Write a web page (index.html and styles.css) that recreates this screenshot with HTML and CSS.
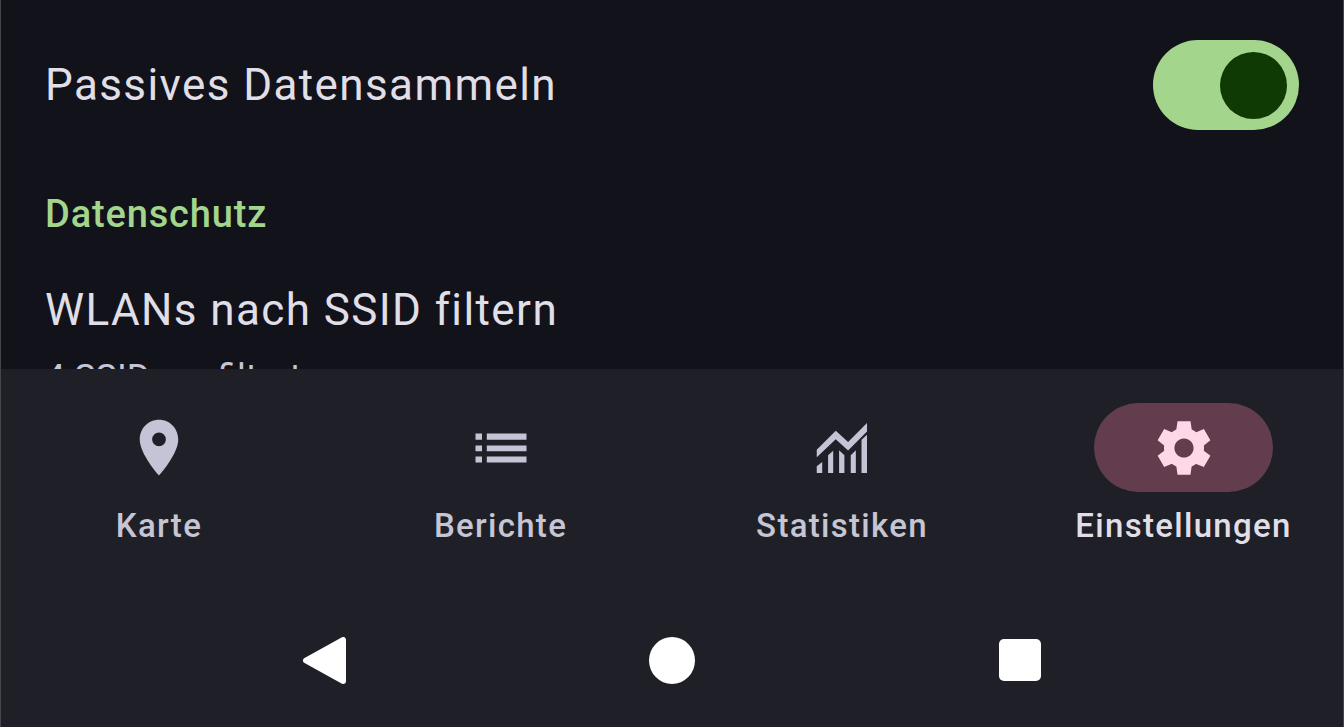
FILE: index.html
```html
<!DOCTYPE html>
<html lang="de">
<head>
<meta charset="utf-8">
<title>Einstellungen</title>
<link rel="stylesheet" href="styles.css">
</head>
<body>
<div class="screen">
  <main class="settings">
    <div class="row-toggle">
      <span class="title">Passives Datensammeln</span>
      <span class="switch"><span class="thumb"></span></span>
    </div>
    <h2 class="section">Datenschutz</h2>
    <div class="pref">
      <div class="title">WLANs nach SSID filtern</div>
      <div class="summary">4 SSIDs gefiltert</div>
    </div>
  </main>
  <div class="bottom">
    <nav class="nav">
      <div class="tab">
        <span class="pill">
          <svg class="icon" viewBox="0 0 24 24"><path d="M12 1.700C8.130 1.700 5 4.830 5 8.900c0 5.350 7 13.100 7 13.100s7-7.750 7-13.100c0-4.070-3.130-7.200-7-7.200zm0 9.700a2.500 2.500 0 0 1 0-5 2.500 2.500 0 0 1 0 5z"/></svg>
        </span>
        <span class="label">Karte</span>
      </div>
      <div class="tab">
        <span class="pill">
          <svg class="icon" viewBox="0 0 66 66"><path d="M7.500 18.500h6.500v6.200h-6.500zM7.500 30.500h6.500v5.800h-6.500zM7.500 41.500h6.500v6h-6.500zM18.800 18.500h39.700v6.200H18.800zM18.800 30.500h39.700v5.800H18.800zM18.800 41.500h39.700v6H18.800z"/></svg>
        </span>
        <span class="label">Berichte</span>
      </div>
      <div class="tab">
        <span class="pill">
          <svg class="icon" viewBox="0 0 66 66"><path d="M7.750 34.670L26.750 15.670 39.080 27 58 8v8.500L39.080 35.500 26.750 24.170 7.750 42.170z"/><path d="M7.750 51.300L13.200 47v11H7.750zM19.100 40.300l5.100-4.600V58h-5.100zM30.100 35.300l5.300 5V58h-5.300zM41.750 40.300l5.100-5V58h-5.100zM52.500 24.700l5.500-5V58h-5.500z"/></svg>
        </span>
        <span class="label">Statistiken</span>
      </div>
      <div class="tab tab-active">
        <span class="pill">
          <svg class="icon" viewBox="0 0 24 24"><path d="M19.440 12.990l-.01.02c.04-.33.08-.67.08-1.010 0-.34-.03-.66-.07-.99l.01.02 2.440-1.920-2.430-4.220-2.870 1.160.01.01c-.52-.4-1.090-.74-1.710-1h.01L14.440 2H9.570l-.44 3.070h.01c-.62.26-1.190.6-1.710 1l.01-.01-2.880-1.170-2.440 4.220 2.440 1.920.01-.02c-.04.33-.07.65-.07.99 0 .34.03.68.08 1.010l-.01-.02-2.100 1.650-.33.26 2.430 4.200 2.880-1.150-.02-.04c.53.41 1.100.75 1.730 1.010h-.03L9.580 22h4.850s.03-.18.06-.42l.38-2.650h-.01c.62-.26 1.200-.6 1.730-1.010l-.02.04 2.880 1.150 2.430-4.200s-.14-.12-.33-.26l-2.110-1.660zM12 15.600c-1.990 0-3.600-1.610-3.600-3.600s1.610-3.600 3.600-3.600 3.600 1.610 3.600 3.600-1.610 3.600-3.600 3.600z"/></svg>
        </span>
        <span class="label">Einstellungen</span>
      </div>
    </nav>
    <div class="sysbar">
      <svg class="sys-back" viewBox="0 0 44 47"><path d="M4 23.500L41 3V44z"/></svg>
      <span class="sys-home"></span>
      <span class="sys-recent"></span>
    </div>
  </div>
</div>
</body>
</html>
```
FILE: styles.css
```css
* { box-sizing: border-box; }
html, body { margin: 0; height: 100%; }
body { background: #12131a; font-family: Roboto, "Liberation Sans", sans-serif; overflow: hidden; }
.screen { width: 1344px; height: 727px; display: flex; flex-direction: column; overflow: hidden; border-left: 1px solid #45464b; border-right: 1px solid #45464b; }
.settings { height: 369px; padding: 0 44px; overflow: hidden; background: #12131a; color: #e0dfe8; }
.row-toggle { display: flex; justify-content: space-between; align-items: center; height: 90px; margin-top: 40px; }
.title { font-size: 44px; line-height: 60px; letter-spacing: 1.4px; color: #e0dfe8; }
.switch { width: 146px; height: 90px; border-radius: 45px; background: #a4d58c; display: flex; align-items: center; justify-content: flex-end; padding-right: 12px; }
.thumb { width: 67px; height: 67px; border-radius: 50%; background: #0f3a03; }
.section { margin: 62px 0 0; font-size: 38px; line-height: 44px; font-weight: 500; letter-spacing: .85px; color: #a4d58c; }
.pref { margin-top: 44px; }
.summary { font-size: 36px; line-height: 52px; color: #c6c5d6; margin-top: 12px; }
.bottom { flex: 1; background: #1f2027; display: flex; flex-direction: column; }
.nav { display: grid; grid-template-columns: repeat(4, 179px); column-gap: 162.5px; height: 209px; padding: 34px 0 0 68.5px; }
.tab { display: flex; flex-direction: column; align-items: center; }
.pill { flex: none; width: 179px; height: 89px; border-radius: 45px; display: flex; align-items: center; justify-content: center; }
.icon { width: 66px; height: 66px; fill: #c5c4d6; }
.label { margin-top: 12px; font-size: 33px; line-height: 44px; font-weight: 500; letter-spacing: 1.3px; color: #c6c5d4; white-space: nowrap; }
.tab-active .pill { background: #633d4e; }
.tab-active .icon { width: 64px; height: 64px; fill: #ffd8e8; }
.tab-active .label { color: #e0dfe8; }
.sysbar { flex: 1; display: flex; align-items: center; gap: 303px; padding: 15px 0 0 301px; }
.sys-back { width: 44px; height: 47px; fill: #fff; stroke: #fff; stroke-width: 6px; stroke-linejoin: round; }
.sys-home { width: 46px; height: 47px; border-radius: 50%; background: #fff; }
.sys-recent { width: 42px; height: 42px; margin-left: 1px; border-radius: 5px; background: #fff; }
```
